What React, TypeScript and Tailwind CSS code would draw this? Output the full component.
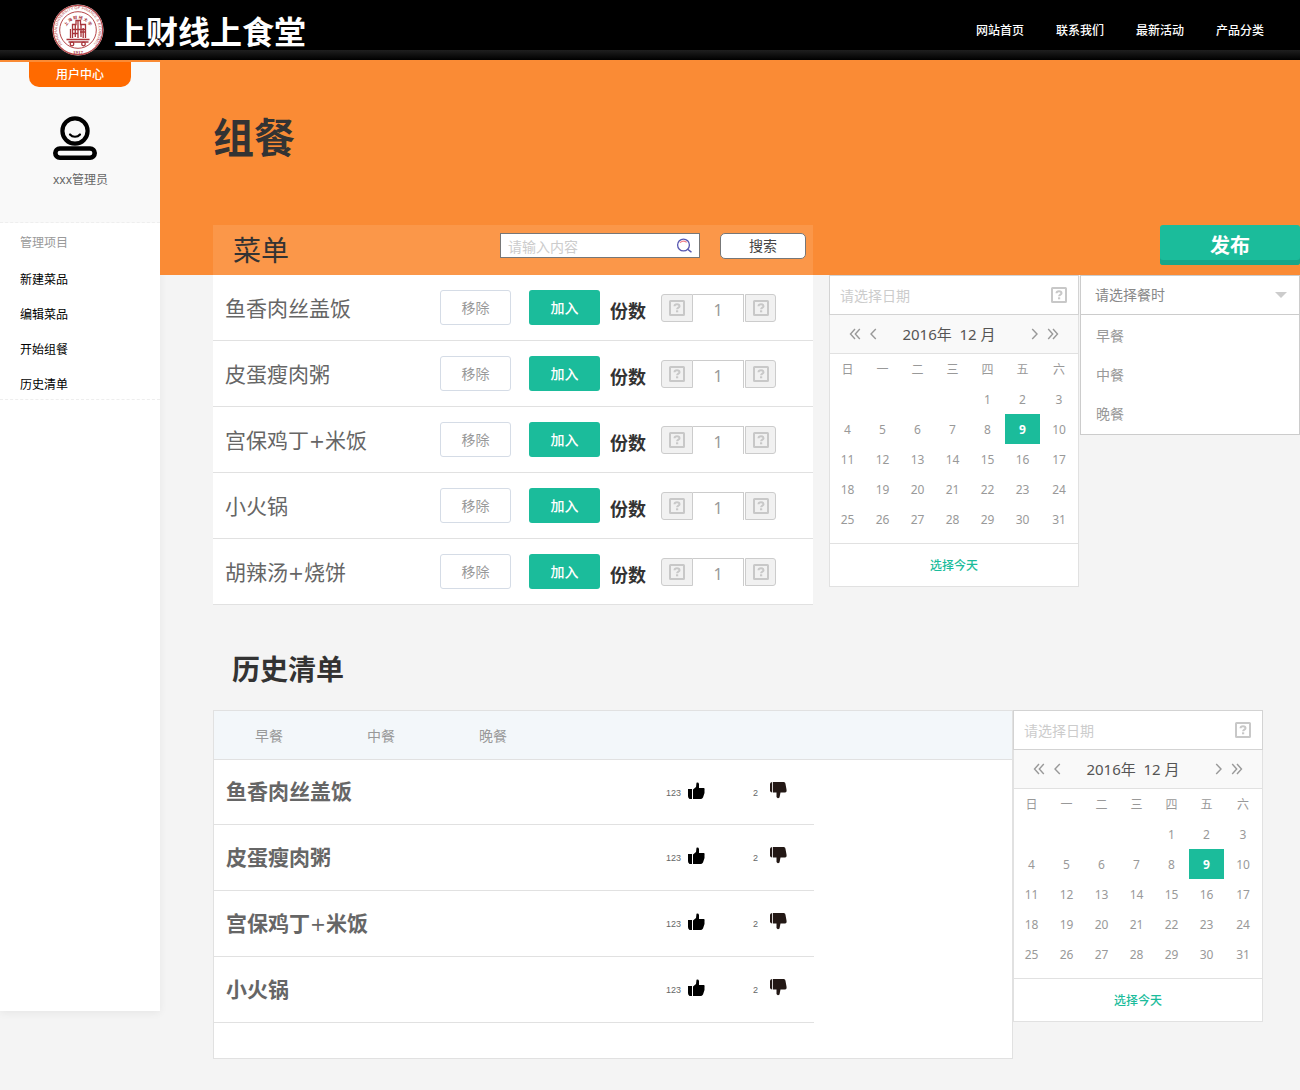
import { useState } from 'react';

const dishes = ['鱼香肉丝盖饭', '皮蛋瘦肉粥', '宫保鸡丁+米饭', '小火锅', '胡辣汤+烧饼'];
const meals = ['早餐', '中餐', '晚餐'];
const weekdays = ['日', '一', '二', '三', '四', '五', '六'];
const weeks: (number | null)[][] = [
  [null, null, null, null, 1, 2, 3],
  [4, 5, 6, 7, 8, 9, 10],
  [11, 12, 13, 14, 15, 16, 17],
  [18, 19, 20, 21, 22, 23, 24],
  [25, 26, 27, 28, 29, 30, 31],
];

function Seal() {
  return (
    <svg viewBox="0 0 52 52" className="h-[52px] w-[52px] shrink-0 overflow-visible" aria-hidden="true">
      <defs>
        <path id="seal-top" d="M11.200 40.800A20.900 20.900 0 1 1 40.800 40.800" />
        <path id="seal-inner" d="M13.500 25A12.800 12.800 0 0 1 38.500 25" />
      </defs>
      <circle cx="26" cy="26" r="25.500" fill="#fff" />
      <circle cx="26" cy="26" r="24.700" fill="none" stroke="#b5474a" strokeWidth="1.200" />
      <circle cx="26" cy="26" r="18.300" fill="none" stroke="#b5474a" strokeWidth="1" />
      <text fill="#b5474a" fontSize="4" fontFamily="Liberation Sans">
        <textPath href="#seal-top" startOffset="50%" textAnchor="middle">
          SHANGHAI UNIVERSITY OF FINANCE &amp; ECONOMICS
        </textPath>
      </text>
      <text fill="#a8343a" fontSize="4" fontFamily="Noto Sans CJK SC" fontWeight="700">
        <textPath href="#seal-inner" startOffset="50%" textAnchor="middle">
          上 海 财 经 大 学
        </textPath>
      </text>
      <g fill="none" stroke="#a8343a" strokeWidth="1.300">
        <path d="M20.500 34V20.500H24V16.500H28.500V20.500H33.500V34" />
        <path d="M23.300 21v12M26 17v17M29 21v12M31.200 24v10M18.500 25v9M21 25.500h12M21 29.500h5M28 28h5" />
        <path d="M14.500 35.500h23M16.500 38h20" />
        <circle cx="20" cy="40" r="1.800" />
        <circle cx="31.500" cy="40" r="1.800" />
      </g>
      <text x="26" y="50" textAnchor="middle" fill="#a8343a" fontSize="5" fontFamily="Liberation Serif" fontWeight="700">
        1917
      </text>
    </svg>
  );
}

function UserIcon() {
  return (
    <svg viewBox="0 0 44 44" className="h-11 w-11" fill="none" stroke="#000" aria-hidden="true">
      <circle cx="22" cy="15" r="12.600" strokeWidth="4.200" />
      <path d="M17 18.500c2.500 3 7.500 3 10 0" strokeWidth="2.200" strokeLinecap="round" />
      <rect x="2.300" y="32.500" width="39.400" height="9.200" rx="4.600" strokeWidth="4.600" />
    </svg>
  );
}

function QuestionBox() {
  return (
    <svg viewBox="0 0 16 16" className="h-4 w-4" fill="none" stroke="#c8c8c8" aria-hidden="true">
      <rect x="1" y="1" width="14" height="14" rx="0.500" strokeWidth="2" />
      <path d="M5.500 6.300C5.500 4.900 6.500 4.300 8 4.300s2.500.7 2.500 1.900C10.500 7.700 8.100 7.600 8.100 9.300" strokeWidth="2" />
      <path d="M8.100 10.300v2" strokeWidth="2.200" />
    </svg>
  );
}

function SearchIcon() {
  return (
    <svg viewBox="0 0 16 16" className="h-4 w-4" fill="none" strokeLinecap="round" aria-hidden="true">
      <circle cx="7.500" cy="7" r="5.900" stroke="#5757b0" strokeWidth="1.300" />
      <path d="M12 11.500l3 2.300" stroke="#5757b0" strokeWidth="1.500" />
      <path d="M4.300 4.400C5.800 3 8.500 2.800 10.300 4" stroke="#f0808a" strokeWidth="1.200" />
    </svg>
  );
}

function Chevron({ double = false, right = false }: { double?: boolean; right?: boolean }) {
  return (
    <svg
      viewBox={double ? '0 0 12 12' : '0 0 8 12'}
      className={`${double ? 'w-3' : 'w-2'} h-3 ${right ? 'rotate-180' : ''}`}
      fill="none"
      stroke="#999"
      strokeWidth="1.400"
      aria-hidden="true"
    >
      <path d={double ? 'M6 1L1.500 6L6 11M10.800 1L6.300 6L10.800 11' : 'M6.800 1L2 6L6.800 11'} />
    </svg>
  );
}

function ThumbUp() {
  return (
    <svg viewBox="0 0 17 17" className="h-[17px] w-[17px]" fill="#000" aria-hidden="true">
      <path d="M0 7h4v10H1.500Q0 16 0 14z" />
      <path d="M5 7.500L8 5 8.500 0.800Q10.500 0 11 2v4h5Q17 6.500 16.500 8v3L15 15.500Q14 17 12.500 17H5z" />
    </svg>
  );
}

function ThumbDown() {
  return (
    <svg viewBox="0 0 17 17" className="h-[17px] w-[17px]" fill="#231815" aria-hidden="true">
      <path d="M0 1.500Q0.500 0 2.200 0v10.500Q0 10.500 0 8.500z" />
      <path d="M3 0H14Q15.500 0.500 15.500 2L16.500 7.500Q17 10.500 15 10.500H10.500L9.500 15.500Q7.500 17 6.500 15V10.500H3z" />
    </svg>
  );
}

function DishName({ name }: { name: string }) {
  const [first, second] = name.split('+');
  return (
    <>
      {first}
      {second && <span className="font-['DejaVu_Sans',sans-serif] text-[19px] leading-5 font-normal">+</span>}
      {second}
    </>
  );
}

function Calendar({ id }: { id: string }) {
  const [selected, setSelected] = useState(9);
  return (
    <section className="w-[250px] shrink-0 bg-white" aria-label="日期选择">
      <div className="flex h-10 items-center border border-[#d3d3d3] pr-[11px] pl-[10px]">
        <label htmlFor={id} className="sr-only">请选择日期</label>
        <input
          id={id}
          placeholder="请选择日期"
          className="h-full min-w-0 flex-1 bg-transparent text-sm leading-6 text-[#666] outline-none placeholder:text-[#ccc]"
        />
        <QuestionBox />
      </div>
      <div className="border-x border-b border-[#e1e1e1]">
        <div className="flex h-[39px] items-center justify-between border-b border-[#e1e1e1] bg-[#f9f9f9] px-[19px]">
          <div className="flex gap-2">
            <button aria-label="上一年"><Chevron double /></button>
            <button aria-label="上一月"><Chevron /></button>
          </div>
          <span className="pr-[10px] text-[15px] whitespace-pre text-[#555]">2016年  12 月</span>
          <div className="flex gap-2">
            <button aria-label="下一月"><Chevron right /></button>
            <button aria-label="下一年"><Chevron double right /></button>
          </div>
        </div>
        <table className="mb-[9px] w-full table-fixed border-collapse text-center text-xs text-[#999]">
          <colgroup>
            {weekdays.map((d, i) => (
              <col key={d} className={i < 6 ? 'w-[35px]' : ''} />
            ))}
          </colgroup>
          <thead>
            <tr>
              {weekdays.map((d) => (
                <th key={d} className="h-[30px] p-0 pt-0.5 font-normal">{d}</th>
              ))}
            </tr>
          </thead>
          <tbody>
            {weeks.map((week, r) => (
              <tr key={r}>
                {week.map((day, c) => (
                  <td key={c} className="h-[30px] p-0">
                    {day && (
                      <button
                        onClick={() => setSelected(day)}
                        className={`h-[30px] w-full pt-0.5 ${day === selected ? 'bg-[#1bbc9b] font-bold text-white' : ''}`}
                      >
                        {day}
                      </button>
                    )}
                  </td>
                ))}
              </tr>
            ))}
          </tbody>
        </table>
        <button className="h-[43px] w-full border-t border-[#e1e1e1] pt-0.5 text-xs font-medium text-[#1bbc9b]">选择今天</button>
      </div>
    </section>
  );
}

function DishRow({ name }: { name: string }) {
  const [count, setCount] = useState(1);
  return (
    <li className="flex h-[66px] items-center border-b border-[#e1e1e1] pr-[37px] pl-3">
      <span className="flex-1 pt-0.5 text-[21px] text-[#666]"><DishName name={name} /></span>
      <button className="mr-[18px] h-[35px] w-[71px] rounded-[3px] border border-[#d5dce6] text-sm text-[#999]">移除</button>
      <button className="mr-[10px] h-[35px] w-[71px] rounded-[3px] bg-[#1bbc9b] text-sm font-medium text-white">加入</button>
      <span className="mr-[15px] pt-1.5 text-lg leading-6 font-bold text-[#333]">份数</span>
      <div className="flex h-7 w-[115px]">
        <button
          aria-label="减少"
          onClick={() => setCount(Math.max(1, count - 1))}
          className="flex w-8 items-center justify-center rounded-l-[3px] border border-[#ccc] bg-[#f1f1f1]"
        >
          <QuestionBox />
        </button>
        <input
          aria-label={`${name}份数`}
          value={count}
          onChange={(e) => setCount(Number(e.target.value) || 1)}
          className="mr-px min-w-0 flex-1 border-t border-r border-[#ccc] pt-[3px] text-center text-base leading-6 text-[#999] outline-none"
        />
        <button
          aria-label="增加"
          onClick={() => setCount(count + 1)}
          className="flex w-[31px] items-center justify-center rounded-r-[3px] border border-[#ccc] bg-[#f1f1f1]"
        >
          <QuestionBox />
        </button>
      </div>
    </li>
  );
}

export default function App() {
  return (
    <div className="min-h-screen bg-[#f4f4f4] pb-[31px] font-['Noto_Sans','Noto_Sans_CJK_SC',sans-serif]">
      <header className="flex h-[60px] items-center justify-between bg-[linear-gradient(#000_50px,#1f1f1f_50px,#000_60px)] pr-9 pl-[52px]">
        <a href="#" className="flex items-center gap-[10px]">
          <Seal />
          <span className="pt-1 text-[32px] leading-10 font-bold text-white">上财线上食堂</span>
        </a>
        <nav className="flex gap-8 pt-0.5 text-xs font-medium text-white">
          {['网站首页', '联系我们', '最新活动', '产品分类'].map((t) => (
            <a key={t} href="#">{t}</a>
          ))}
        </nav>
      </header>

      <div className="flex items-start">
        <aside className="min-h-[951px] w-40 shrink-0 border-t-2 border-[#fa8b35] bg-white shadow-[0_2px_8px_rgba(0,0,0,0.06)]">
          <div className="h-[161px] border-b border-dashed border-b-[#eee] bg-[#f9f9f9]">
            <h2 className="mx-[29px] h-[25px] rounded-b-[10px] bg-[#ff6a00] text-center text-xs leading-[26px] font-medium text-white">
              用户中心
            </h2>
            <div className="pt-[29px] pl-[53px]">
              <UserIcon />
              <p className="pt-2.5 text-xs leading-5 text-[#666]">xxx管理员</p>
            </div>
          </div>
          <nav className="border-b border-dashed border-b-[#eee] text-xs">
            <h3 className="px-5 leading-[39px] text-[#999]">管理项目</h3>
            <ul className="flex h-[137px] flex-col">
              {['新建菜品', '编辑菜品', '开始组餐', '历史清单'].map((t) => (
                <li key={t}>
                  <a href="#" className="block px-5 leading-[35px] text-black">{t}</a>
                </li>
              ))}
            </ul>
          </nav>
        </aside>

        <main className="min-w-0 flex-1">
          <div className="bg-[#fa8b35] pl-[53px]">
            <h1 className="pt-[47px] text-[41px] leading-[60px] font-bold text-[#333]">组餐</h1>
            <div className="flex pt-[58px]">
              <div className="flex h-[50px] min-w-[600px] flex-1 items-center bg-white/10 pr-[7px] pl-5">
                <h2 className="flex-1 text-[28px] leading-[42px] text-[#333]">菜单</h2>
                <div className="mb-[9px] flex h-[25px] w-[200px] items-center border border-[#777] bg-white px-[7px]">
                  <label htmlFor="keyword" className="sr-only">请输入内容</label>
                  <input
                    id="keyword"
                    placeholder="请输入内容"
                    className="h-full min-w-0 flex-1 pt-px text-sm leading-[22px] text-[#666] outline-none placeholder:text-[#ccc]"
                  />
                  <SearchIcon />
                </div>
                <button className="mb-2 ml-5 h-[26px] w-[86px] rounded-[5px] border border-[#777] bg-white text-sm text-[#444]">
                  搜索
                </button>
              </div>
              <div className="flex w-[487px] shrink-0 items-start justify-end">
                <button className="h-10 w-[140px] rounded-[3px] bg-[#1bbc9b] pt-px text-xl font-bold text-white shadow-[inset_0_-5px_0_#18a689]">
                  发布
                </button>
              </div>
            </div>
          </div>

          <div className="flex items-start pl-[53px]">
            <ul className="mr-4 min-w-[600px] flex-1 bg-white">
              {dishes.map((d) => (
                <DishRow key={d} name={d} />
              ))}
            </ul>
            <Calendar id="menu-date" />
            <div className="ml-px min-h-40 w-[220px] shrink-0 border border-[#ccc] bg-white text-sm text-[#999]">
              <div className="flex h-[39px] items-center border-b border-[#ccc] pr-3 pl-[14px]">
                <select aria-label="餐时" className="h-full flex-1 appearance-none bg-transparent text-[#888] outline-none">
                  <option>请选择餐时</option>
                  {meals.map((m) => (
                    <option key={m}>{m}</option>
                  ))}
                </select>
                <svg viewBox="0 0 12 6" className="h-1.5 w-3" fill="#ccc" aria-hidden="true">
                  <path d="M0 0h12L6 6z" />
                </svg>
              </div>
              <ul className="flex flex-col pt-px">
                {meals.map((m) => (
                  <li key={m}>
                    <button className="h-[39px] w-full px-[15px] pt-px text-left">{m}</button>
                  </li>
                ))}
              </ul>
            </div>
          </div>

          <h2 className="mt-[43px] pl-[72px] text-[28px] leading-[42px] font-bold text-[#333]">历史清单</h2>
          <div className="mt-5 flex items-start pr-[37px] pl-[53px]">
            <section className="min-h-[349px] min-w-0 flex-1 border border-[#e1e1e1] bg-white">
              <div className="flex h-[49px] items-center gap-[84px] border-b border-[#e1e1e1] bg-[#f3f7fa] pt-0.5 pl-[41px] text-sm text-[#999]">
                {meals.map((m) => (
                  <button key={m}>{m}</button>
                ))}
              </div>
              <ul className="w-[600px] max-w-full">
                {dishes.slice(0, 4).map((d) => (
                  <li key={d} className="flex h-[66px] items-center border-b border-[#e1e1e1] pr-[27px] pl-3 first:h-[65px]">
                    <span className="flex-1 text-[21px] font-bold text-[#666]"><DishName name={d} /></span>
                    <button className="mr-12 flex items-end gap-[7px] pb-1">
                      <span className="font-['Liberation_Sans',sans-serif] text-[9px] leading-3 text-[#666]">123</span>
                      <ThumbUp />
                    </button>
                    <button className="flex items-end gap-3 pb-1">
                      <span className="font-['Liberation_Sans',sans-serif] text-[9px] leading-3 text-[#666]">2</span>
                      <ThumbDown />
                    </button>
                  </li>
                ))}
              </ul>
            </section>
            <Calendar id="history-date" />
          </div>
        </main>
      </div>
    </div>
  );
}
